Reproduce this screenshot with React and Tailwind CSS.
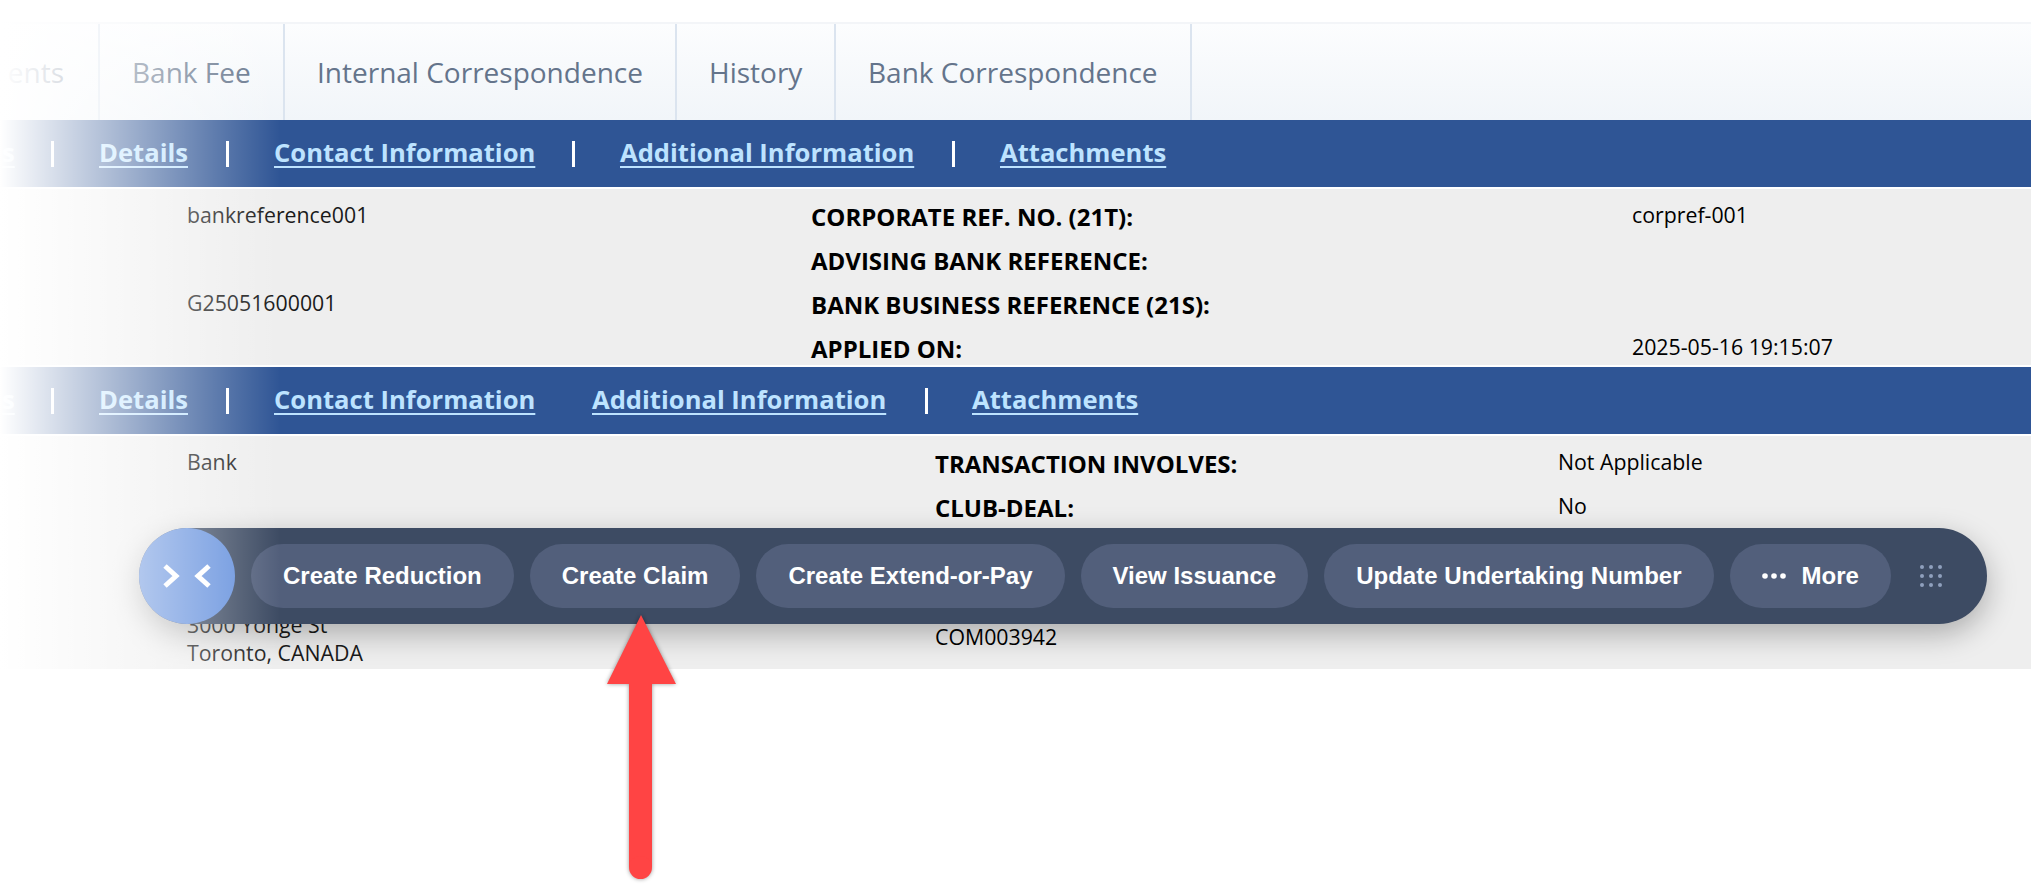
import React from "react";

const openSans = { fontFamily: '"Open Sans", "Noto Sans", sans-serif' };

function Sep({ className = "" }) {
  return <span className={`w-[3px] h-[26px] bg-white shrink-0 ${className}`} />;
}

function LinkText({ children, className = "" }) {
  return (
    <a className={`text-[#bde3ff] underline decoration-2 underline-offset-[4px] font-bold text-[25.6px] leading-[32px] whitespace-nowrap -mt-[1px] shrink-0 ${className}`}>
      {children}
    </a>
  );
}

function Tab({ children, className = "" }) {
  return (
    <div className={`h-full flex items-center border-r-2 border-[#dbe4ef] text-[#64748b] text-[28px] shrink-0 ${className}`}>
      {children}
    </div>
  );
}

function Action({ children }) {
  return (
    <button className="h-[64px] px-[32px] rounded-full bg-[#525f7b] text-white font-bold text-[24px] flex items-center shrink-0">
      {children}
    </button>
  );
}

export default function App() {
  return (
    <div className="relative w-[2031px] h-[884px] overflow-hidden bg-white text-black pt-[22px]" style={openSans}>
      {/* tabs */}
      <div className="h-[98px] border-t-2 border-[#f3f5f8] bg-gradient-to-b from-[#fcfdfe] to-[#f1f5f9] flex">
        <Tab className="w-[100px] justify-end pr-[34px]">ents</Tab>
        <Tab className="w-[185px] pl-[32px]">Bank Fee</Tab>
        <Tab className="w-[392px] pl-[32px]">Internal Correspondence</Tab>
        <Tab className="w-[159px] pl-[32px]">History</Tab>
        <Tab className="w-[356px] pl-[32px]">Bank Correspondence</Tab>
      </div>

      {/* first nav */}
      <div className="h-[67px] bg-[#2f5595] flex items-center">
        <LinkText className="w-[51px] pl-[2px]">s</LinkText>
        <Sep className="mr-[45px]" />
        <LinkText className="w-[89px]">Details</LinkText>
        <Sep className="ml-[38px] mr-[45px]" />
        <LinkText className="w-[260px]">Contact Information</LinkText>
        <Sep className="ml-[38px] mr-[45px]" />
        <LinkText className="w-[294px]">Additional Information</LinkText>
        <Sep className="ml-[38px] mr-[45px]" />
        <LinkText>Attachments</LinkText>
      </div>

      {/* first section */}
      <div className="mt-[2px] h-[176px] bg-[#eeeeee] pl-[187px] pt-[13px] grid grid-cols-[624px_821px_1fr] gap-y-[14px] auto-rows-[30px] text-[21.3px]">
        <div className="leading-[26px] text-[#1a1a1a]">bankreference001</div>
        <div className="font-bold text-[24px] leading-[30px]">CORPORATE REF. NO. (21T):</div>
        <div className="leading-[26px]">corpref-001</div>
        <div />
        <div className="font-bold text-[24px] leading-[30px]">ADVISING BANK REFERENCE:</div>
        <div />
        <div className="leading-[26px] text-[#1a1a1a]">G25051600001</div>
        <div className="font-bold text-[24px] leading-[30px]">BANK BUSINESS REFERENCE (21S):</div>
        <div />
        <div />
        <div className="font-bold text-[24px] leading-[30px]">APPLIED ON:</div>
        <div className="leading-[26px]">2025-05-16 19:15:07</div>
      </div>

      {/* second nav */}
      <div className="mt-[2px] h-[67px] bg-[#2f5595] flex items-center">
        <LinkText className="w-[51px] pl-[2px]">s</LinkText>
        <Sep className="mr-[45px]" />
        <LinkText className="w-[89px]">Details</LinkText>
        <Sep className="ml-[38px] mr-[45px]" />
        <LinkText className="w-[260px]">Contact Information</LinkText>
        <LinkText className="ml-[58px] w-[295px]">Additional Information</LinkText>
        <Sep className="ml-[38px] mr-[44px]" />
        <LinkText>Attachments</LinkText>
      </div>

      {/* second section */}
      <div className="mt-[2px] h-[233px] bg-[#eeeeee] pl-[187px] pt-[13px] flex text-[21.3px]">
        <div className="w-[748px] text-[#1a1a1a]">
          <div className="leading-[26px]">Bank</div>
          <div className="mt-[136px] leading-[28px]">3000 Yonge St</div>
          <div className="leading-[28px]">Toronto, CANADA</div>
        </div>
        <div className="w-[623px]">
          <div className="font-bold text-[24px] leading-[30px]">TRANSACTION INVOLVES:</div>
          <div className="mt-[14px] font-bold text-[24px] leading-[30px]">CLUB-DEAL:</div>
          <div className="mt-[100px] leading-[28px]">COM003942</div>
        </div>
        <div>
          <div className="leading-[26px]">Not Applicable</div>
          <div className="mt-[18px] leading-[26px]">No</div>
        </div>
      </div>

      {/* floating toolbar */}
      <div
        className="absolute left-[139px] top-[528px] w-[1848px] h-[96px] rounded-full bg-[#3d4b63] shadow-[0_10px_30px_rgba(0,0,0,0.28)] flex items-center"
        style={{ fontFamily: '"Liberation Sans", Arial, sans-serif' }}
      >
        <div className="w-[96px] h-[96px] rounded-full bg-[#6490dd] flex items-center justify-center shrink-0">
          <svg width="48" height="24" viewBox="0 0 48 24" fill="none" stroke="#fff" strokeWidth="5">
            <polyline points="2,2 13,12 2,22" />
            <polyline points="46,2 35,12 46,22" />
          </svg>
        </div>
        <div className="ml-[16px] flex items-center gap-4">
          <Action>Create Reduction</Action>
          <Action>Create Claim</Action>
          <Action>Create Extend-or-Pay</Action>
          <Action>View Issuance</Action>
          <Action>Update Undertaking Number</Action>
          <Action>
            <svg width="24" height="6" viewBox="0 0 24 6" fill="#fff" className="mr-[16px]">
              <circle cx="3" cy="3" r="2.8" />
              <circle cx="12" cy="3" r="2.8" />
              <circle cx="21" cy="3" r="2.8" />
            </svg>
            More
          </Action>
        </div>
        <svg width="22" height="22" viewBox="0 0 22 22" fill="#8fa0bd" className="ml-[29px] shrink-0">
          {[2, 11, 20].map((y) =>
            [2, 11, 20].map((x) => <circle key={`${x}-${y}`} cx={x} cy={y} r="2" />)
          )}
        </svg>
      </div>

      {/* left fade */}
      <div className="absolute left-0 top-0 w-[280px] h-[700px] bg-gradient-to-r from-white to-transparent pointer-events-none" />

      {/* annotation arrow */}
      <svg
        className="absolute left-[600px] top-[610px] drop-shadow-[0_0_2px_rgba(0,0,0,0.4)]"
        width="84"
        height="274"
        viewBox="0 0 84 274"
        fill="#ff4444"
      >
        <polygon points="41,5 7,74 29,74 29,257 52,257 52,74 76,74" />
        <circle cx="40.5" cy="257.5" r="11.5" />
      </svg>
    </div>
  );
}
